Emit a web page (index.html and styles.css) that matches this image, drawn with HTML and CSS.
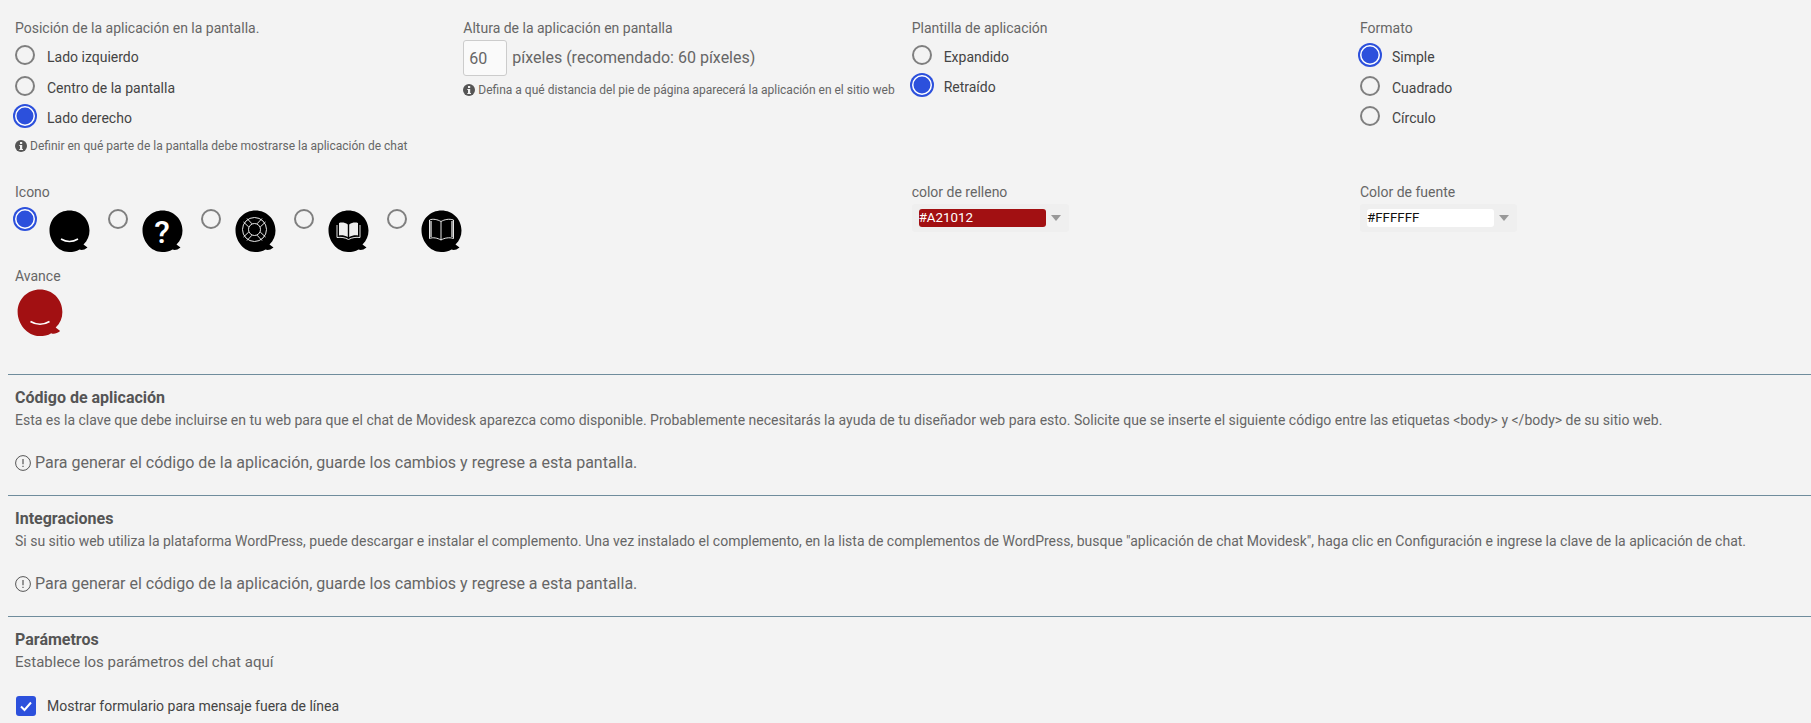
FILE: index.html

```html
<!DOCTYPE html>
<html lang="es">
<head>
    <meta charset="UTF-8">
    <meta name="viewport" content="width=device-width, initial-scale=1.0">
    <title>Aplicación de chat</title>
    <link rel="stylesheet" href="styles.css">
</head>
<body>
    <svg class="defs" width="0" height="0">
        <symbol id="bubble" viewBox="0 0 41 42">
            <path d="M20.500 0.500C31.500 0.500 40.500 9 40.500 20.500C40.500 26 38.500 30.500 34.500 34.500L38.500 37.500C35.500 40 32.500 40.500 30.500 39.500C27.500 41.500 24 42 20 42C9 42 0.500 31 0.500 20.500C0.500 9 9.500 0.500 20.500 0.500Z"/>
        </symbol>
        <symbol id="info" viewBox="0 0 12 12">
            <circle cx="6" cy="6" r="6" fill="#555"/>
            <rect x="5" y="2" width="2.200" height="2" fill="#f3f3f3"/>
            <path d="M4.300 5H7.200V9H8V10H4.300V9H5V6H4.300Z" fill="#f3f3f3"/>
        </symbol>
        <symbol id="notice" viewBox="0 0 16 16">
            <circle cx="8" cy="8" r="7.400" fill="none" stroke="#555" stroke-width="1"/>
            <path d="M8 4V9.200" stroke="#555" stroke-width="1.200"/>
            <path d="M8 10.800V12" stroke="#555" stroke-width="1.200"/>
        </symbol>
    </svg>

    <div class="settings">
        <div class="field">
            <div class="fieldLabel">Posición de la aplicación en la pantalla.</div>
            <label class="radioRow"><input type="radio" name="position"><span class="radioText">Lado izquierdo</span></label>
            <label class="radioRow"><input type="radio" name="position"><span class="radioText">Centro de la pantalla</span></label>
            <label class="radioRow"><input type="radio" name="position" checked><span class="radioText">Lado derecho</span></label>
            <div class="hint hintRadios"><svg class="hintIcon"><use href="#info"/></svg>Definir en qué parte de la pantalla debe mostrarse la aplicación de chat</div>
        </div>

        <div class="field">
            <div class="fieldLabel">Altura de la aplicación en pantalla</div>
            <div class="heightRow">
                <input class="heightInput" type="text" value="60">
                <span>píxeles (recomendado: 60 píxeles)</span>
            </div>
            <div class="hint hintHeight"><svg class="hintIcon"><use href="#info"/></svg>Defina a qué distancia del pie de página aparecerá la aplicación en el sitio web</div>
        </div>

        <div class="field">
            <div class="fieldLabel">Plantilla de aplicación</div>
            <label class="radioRow"><input type="radio" name="template"><span class="radioText">Expandido</span></label>
            <label class="radioRow radioRowUp"><input type="radio" name="template" checked><span class="radioText">Retraído</span></label>
        </div>

        <div class="field">
            <div class="fieldLabel">Formato</div>
            <label class="radioRow"><input type="radio" name="format" checked><span class="radioText">Simple</span></label>
            <label class="radioRow"><input type="radio" name="format"><span class="radioText">Cuadrado</span></label>
            <label class="radioRow"><input type="radio" name="format"><span class="radioText">Círculo</span></label>
        </div>

        <div class="field iconField">
            <div class="fieldLabel">Icono</div>
            <div class="iconOptions">
                <div class="iconOption">
                    <input type="radio" name="icon" checked>
                    <svg class="bubble" viewBox="0 0 41 42">
                        <use href="#bubble"/>
                        <path class="iconLine" d="M12 29Q20.500 34 29 29"/>
                    </svg>
                </div>
                <div class="iconOption">
                    <input type="radio" name="icon">
                    <svg class="bubble" viewBox="0 0 41 42">
                        <use href="#bubble"/>
                        <text class="iconMark" x="20" y="32.500">?</text>
                    </svg>
                </div>
                <div class="iconOption">
                    <input type="radio" name="icon">
                    <svg class="bubble" viewBox="0 0 41 42">
                        <use href="#bubble"/>
                        <circle class="iconThin" cx="19.500" cy="19.500" r="12"/>
                        <circle class="iconThin" cx="19.500" cy="19.500" r="6"/>
                        <path class="iconThin" d="M12 8.500L17 13.800M8.500 12L13.800 17M27 8.500L22 13.800M30.500 12L25.200 17M12 30.500L17 25.200M8.500 27L13.800 22M27 30.500L22 25.200M30.500 27L25.200 22"/>
                    </svg>
                </div>
                <div class="iconOption">
                    <input type="radio" name="icon">
                    <svg class="bubble" viewBox="0 0 41 42">
                        <use href="#bubble"/>
                        <path class="iconFill" d="M11 13C14 12 17 12.500 19.800 14.500V27C17 25.500 14 25 11 25.500Z"/>
                        <path class="iconFill" d="M30 13C27 12 24 12.500 21.200 14.500V27C24 25.500 27 25 30 25.500Z"/>
                        <path class="iconThin" d="M9 15V27.500C13 27 17 27.500 20.500 29.500C24 27.500 28 27 32 27.500V15"/>
                    </svg>
                </div>
                <div class="iconOption">
                    <input type="radio" name="icon">
                    <svg class="bubble" viewBox="0 0 41 42">
                        <use href="#bubble"/>
                        <path class="iconThin" d="M8.500 10C12 8.500 16.500 9.500 20 11.500C23.500 9.500 28 8.500 32.500 10V28.500C28 27 23.500 28 20 30C16.500 28 12 27 8.500 28.500Z"/>
                        <path class="iconThin" d="M20 11.500V30"/>
                        <path class="iconWide" d="M10 11V27M31 11V27"/>
                    </svg>
                </div>
            </div>
            <div class="fieldLabel previewLabel">Avance</div>
            <svg class="bubble bubblePreview" viewBox="0 0 41 42">
                <use href="#bubble"/>
                <path class="iconLine" d="M12 29Q20.500 34 29 29"/>
            </svg>
        </div>

        <div class="field">
            <div class="fieldLabel">color de relleno</div>
            <div class="colorSelect">
                <div class="colorValue colorFill">#A21012</div>
                <span class="caret"></span>
            </div>
        </div>

        <div class="field">
            <div class="fieldLabel">Color de fuente</div>
            <div class="colorSelect">
                <div class="colorValue colorFont">#FFFFFF</div>
                <span class="caret"></span>
            </div>
        </div>
    </div>

    <div class="section">
        <div class="sectionTitle">Código de aplicación</div>
        <div class="sectionText">Esta es la clave que debe incluirse en tu web para que el chat de Movidesk aparezca como disponible. Probablemente necesitarás la ayuda de tu diseñador web para esto. Solicite que se inserte el siguiente código entre las etiquetas &lt;body&gt; y &lt;/body&gt; de su sitio web.</div>
        <div class="notice"><svg class="noticeIcon"><use href="#notice"/></svg>Para generar el código de la aplicación, guarde los cambios y regrese a esta pantalla.</div>
    </div>

    <div class="section">
        <div class="sectionTitle">Integraciones</div>
        <div class="sectionText">Si su sitio web utiliza la plataforma WordPress, puede descargar e instalar el complemento. Una vez instalado el complemento, en la lista de complementos de WordPress, busque "aplicación de chat Movidesk", haga clic en Configuración e ingrese la clave de la aplicación de chat.</div>
        <div class="notice"><svg class="noticeIcon"><use href="#notice"/></svg>Para generar el código de la aplicación, guarde los cambios y regrese a esta pantalla.</div>
    </div>

    <div class="section">
        <div class="sectionTitle">Parámetros</div>
        <div class="sectionText sectionTextLarge">Establece los parámetros del chat aquí</div>
        <label class="checkRow">
            <span class="checkBox">
                <svg width="20" height="20" viewBox="0 0 20 20"><path d="M5 10.500L8.500 14L15 6.500" fill="none" stroke="#fff" stroke-width="2"/></svg>
            </span>
            <span>Mostrar formulario para mensaje fuera de línea</span>
        </label>
    </div>
</body>
</html>
```

FILE: styles.css

```css
body {
    font-family: Roboto, "Liberation Sans", sans-serif;
    font-size: 14px;
    line-height: 20px;
    margin: 0;
    background-color: #f3f3f3;
    color: #666;
}

.defs {
    position: absolute;
}

.settings {
    display: grid;
    grid-template-columns: repeat(4, 448.33px);
    row-gap: 28px;
    padding: 18px 0 38px 15px;
}

.fieldLabel {
    color: #666;
}

input[type="radio"] {
    appearance: none;
    flex: none;
    width: 20px;
    height: 20px;
    margin: 0;
    border: 2px solid #7f7f7f;
    border-radius: 50%;
}

input[type="radio"]:checked {
    border: none;
    background-color: #2c50dc;
    box-shadow: 0 0 0 2px #2c50dc, inset 0 0 0 1.5px #fff;
}

.radioRow {
    display: flex;
    align-items: center;
    gap: 12px;
    height: 30.5px;
    color: #444;
}

.radioRow:first-of-type {
    margin-top: 2.2px;
}

.radioRowUp {
    margin-top: -1px;
}

.radioText {
    padding-top: 3.4px;
}

.hint {
    display: flex;
    align-items: center;
    font-size: 12px;
    line-height: 16px;
    color: #666;
}

.hintRadios {
    margin-top: 6.3px;
}

.hintHeight {
    margin-top: 6px;
}

.hintIcon {
    width: 12px;
    height: 12px;
    margin-right: 3px;
}

.heightRow {
    display: flex;
    align-items: center;
    gap: 5px;
    margin-top: 2px;
    font-size: 16px;
    color: #666;
}

.heightInput {
    box-sizing: border-box;
    width: 44px;
    height: 36px;
    padding: 0 5px;
    border: 1px solid #ccc;
    border-radius: 3px;
    background-color: #fafafa;
    font-family: inherit;
    font-size: 16px;
    color: #666;
}

.iconField {
    grid-column: span 2;
}

.iconOptions {
    display: flex;
    gap: 18px;
}

.iconOption {
    display: flex;
    align-items: flex-start;
    gap: 14px;
}

.iconOption input {
    margin-top: 7px;
}

.bubble {
    width: 41px;
    height: 42px;
    margin-top: 8px;
    fill: #000;
}

.bubblePreview {
    display: block;
    width: 46px;
    height: 47px;
    margin: 3px 0 0 2px;
    fill: #a21012;
}

.previewLabel {
    margin-top: 14px;
}

.iconLine {
    fill: none;
    stroke: #fff;
    stroke-width: 1.5;
}

.iconThin {
    fill: none;
    stroke: #fff;
    stroke-width: 0.9;
}

.iconWide {
    fill: none;
    stroke: #bbb;
    stroke-width: 1.6;
}

.iconFill {
    fill: #eee;
}

.iconMark {
    fill: #fff;
    font-size: 32px;
    font-weight: 500;
    text-anchor: middle;
}

.colorSelect {
    box-sizing: border-box;
    display: flex;
    align-items: center;
    width: 157px;
    height: 28px;
    margin-top: 2px;
    padding: 0 7px;
    border-radius: 3px;
    background-color: #efefef;
}

.colorValue {
    flex: none;
    width: 127px;
    height: 18px;
    border-radius: 3px;
    font-size: 13.33px;
    line-height: 18px;
}

.colorFill {
    background-color: #a21012;
    color: #fff;
}

.colorFont {
    background-color: #fff;
    color: #111;
}

.caret {
    margin-left: 5px;
    border-top: 6px solid #999;
    border-left: 5px solid transparent;
    border-right: 5px solid transparent;
}

.section {
    margin-left: 8px;
    padding: 13px 0 20px 7px;
    border-top: 1px solid #6f8c9c;
}

.sectionTitle {
    font-size: 16px;
    font-weight: 700;
    color: #555;
}

.sectionText {
    margin-top: 2px;
    color: #666;
}

.sectionTextLarge {
    font-size: 15px;
}

.notice {
    display: flex;
    align-items: center;
    margin-top: 21px;
    font-size: 16px;
    line-height: 24px;
    color: #666;
}

.noticeIcon {
    width: 16px;
    height: 16px;
    margin-right: 4px;
}

.checkRow {
    display: flex;
    align-items: center;
    gap: 11px;
    margin: 24px 0 0 1px;
    color: #444;
}

.checkBox {
    display: block;
    width: 20px;
    height: 20px;
    border-radius: 3px;
    background-color: #2c50dc;
}
```
